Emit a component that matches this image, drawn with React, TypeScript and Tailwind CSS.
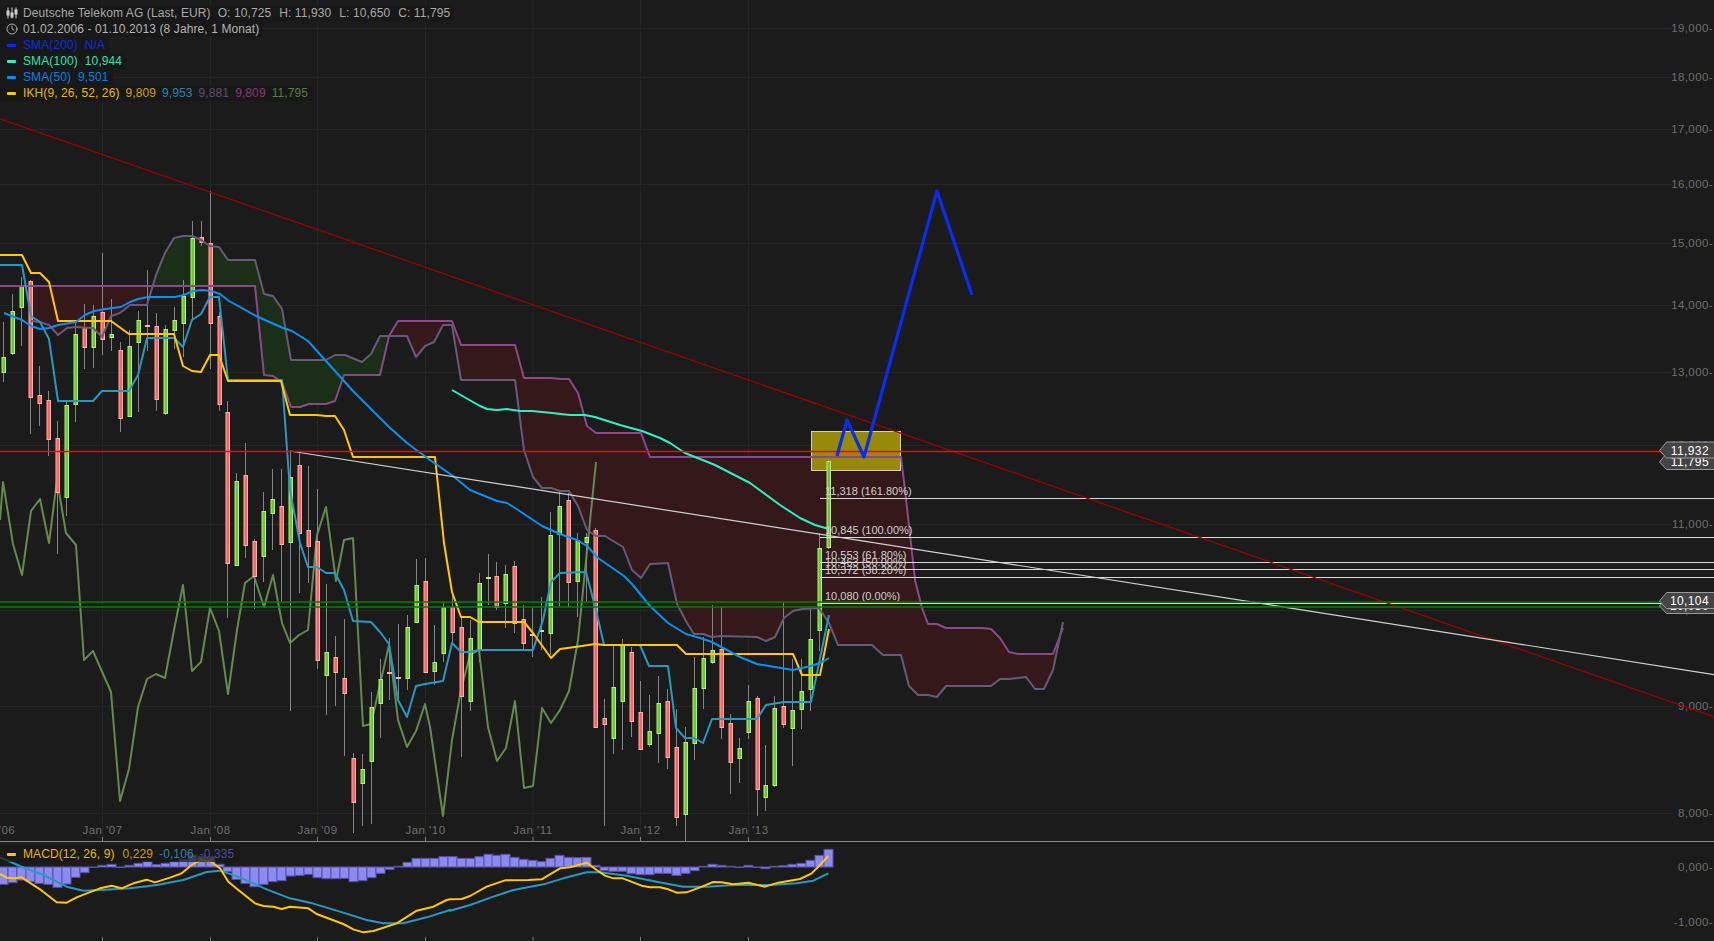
import React from 'react';
import { Clock } from 'lucide-react';

type Pt = [number, number];
type Candle = [number, number, number, number, 'g' | 'r'];

// wick top, wick bottom, body top, body bottom, colour - one per month from the left edge
const CANDLES: Candle[] = [
  [322, 382, 357, 372, 'g'], [294, 355, 311, 353, 'g'], [277, 346, 286, 307, 'g'], [280, 434, 281, 397, 'r'],
  [366, 426, 395, 403, 'r'], [391, 456, 400, 439, 'r'], [421, 554, 438, 492, 'r'], [402, 516, 405, 497, 'g'],
  [323, 422, 334, 404, 'g'], [304, 369, 327, 347, 'r'], [305, 368, 316, 347, 'g'], [253, 355, 312, 339, 'r'],
  [299, 351, 334, 337, 'g'], [342, 432, 350, 418, 'r'], [330, 417, 346, 416, 'g'], [311, 412, 320, 342, 'g'],
  [270, 351, 325, 327, 'r'], [313, 411, 326, 399, 'r'], [325, 415, 329, 413, 'g'], [307, 349, 320, 330, 'g'],
  [280, 357, 296, 323, 'g'], [221, 320, 238, 297, 'g'], [221, 246, 237, 242, 'r'], [191, 369, 243, 323, 'r'],
  [312, 411, 316, 404, 'r'], [401, 618, 412, 563, 'r'], [473, 565, 481, 565, 'g'], [443, 558, 475, 545, 'r'],
  [539, 609, 541, 576, 'r'], [492, 582, 511, 556, 'g'], [469, 550, 499, 513, 'g'], [469, 601, 506, 544, 'r'],
  [451, 711, 477, 542, 'g'], [451, 593, 465, 533, 'r'], [466, 583, 530, 546, 'r'], [489, 669, 541, 660, 'r'],
  [584, 715, 652, 675, 'g'], [636, 706, 657, 672, 'r'], [619, 756, 678, 693, 'r'], [753, 833, 758, 802, 'r'],
  [754, 826, 769, 783, 'g'], [692, 824, 707, 761, 'g'], [659, 738, 679, 703, 'g'], [638, 700, 672, 673, 'r'],
  [624, 700, 677, 678, 'r'], [615, 690, 627, 678, 'g'], [559, 622, 585, 622, 'g'], [558, 672, 581, 672, 'r'],
  [625, 685, 662, 671, 'g'], [602, 662, 607, 653, 'g'], [593, 643, 607, 632, 'r'], [618, 757, 627, 696, 'r'],
  [620, 711, 638, 701, 'g'], [573, 662, 583, 649, 'g'], [554, 605, 577, 578, 'g'], [562, 610, 576, 607, 'r'],
  [565, 628, 574, 603, 'g'], [561, 633, 566, 623, 'r'], [605, 650, 619, 643, 'r'], [608, 657, 634, 635, 'r'],
  [597, 650, 630, 631, 'g'], [512, 655, 535, 633, 'g'], [492, 607, 506, 534, 'g'], [493, 607, 500, 582, 'r'],
  [533, 617, 540, 581, 'g'], [533, 602, 537, 542, 'g'], [528, 728, 530, 727, 'r'], [699, 826, 718, 724, 'r'],
  [646, 754, 687, 738, 'g'], [639, 750, 645, 701, 'g'], [647, 737, 652, 721, 'r'], [681, 750, 712, 749, 'r'],
  [695, 747, 731, 744, 'g'], [676, 763, 703, 733, 'g'], [689, 769, 701, 757, 'r'], [709, 826, 747, 817, 'r'],
  [727, 841, 742, 814, 'g'], [657, 760, 688, 743, 'g'], [637, 709, 658, 688, 'g'], [605, 664, 650, 662, 'g'],
  [607, 739, 649, 727, 'r'], [714, 794, 723, 762, 'r'], [738, 783, 748, 758, 'g'], [685, 739, 701, 732, 'g'],
  [696, 816, 698, 789, 'r'], [745, 811, 785, 797, 'g'], [696, 787, 708, 785, 'g'], [602, 728, 706, 724, 'r'],
  [659, 766, 710, 728, 'g'], [659, 729, 691, 709, 'g'], [607, 711, 639, 689, 'g'], [533, 651, 548, 630, 'g'],
  [452, 549, 461, 547, 'g'],
];

const TENKAN: Pt[] = [[0,255],[22,255],[31,273],[40,273],[49,282],[58,321],[111,321],[129,334],[174,334],[183,366],[192,371],[201,372],[210,355],[219,355],[228,381],[281,381],[290,415],[317,415],[326,416],[335,416],[344,430],[353,457],[435,457],[444,543],[452,592],[461,617],[470,617],[479,622],[524,622],[533,633],[551,658],[560,649],[575,647],[595,644],[604,645],[677,645],[686,654],[793,654],[802,675],[820,675],[829,629]];
const KIJUN: Pt[] = [[0,265],[22,265],[31,316],[40,322],[49,339],[58,401],[93,401],[102,391],[129,391],[138,375],[147,338],[174,338],[183,347],[192,320],[201,314],[210,297],[219,297],[228,380],[282,380],[290,490],[300,543],[308,567],[317,567],[326,573],[335,573],[344,590],[353,621],[371,622],[380,632],[389,644],[398,700],[407,717],[416,686],[425,684],[443,681],[452,643],[461,652],[470,652],[479,650],[533,650],[543,620],[551,582],[560,573],[586,572],[596,610],[604,645],[640,645],[649,666],[668,666],[676,728],[685,738],[694,738],[703,743],[712,719],[757,719],[766,705],[784,702],[811,702],[829,615]];
const SMA50: Pt[] = [[4,313],[22,320],[31,326],[40,329],[49,328],[58,325],[76,322],[85,315],[94,311],[112,308],[121,307],[130,302],[138,299],[148,297],[175,297],[184,295],[193,291],[202,290],[211,291],[220,294],[229,301],[256,316],[283,328],[292,331],[308,341],[326,361],[353,391],[380,418],[389,427],[407,443],[430,460],[453,476],[470,490],[497,501],[507,503],[515,508],[542,526],[560,534],[577,540],[587,546],[598,558],[624,576],[632,584],[650,606],[668,623],[686,634],[700,638],[712,642],[740,657],[757,664],[775,667],[793,670],[802,668],[811,666],[820,663],[829,658]];
const SMA100: Pt[] = [[452,390],[480,406],[487,409],[497,410],[507,409],[520,411],[532,411],[552,413],[570,415],[585,415],[595,417],[620,425],[642,431],[660,438],[670,443],[685,453],[715,465],[750,483],[780,505],[800,518],[815,525],[829,529]];
const SENKOU_B: Pt[] = [[0,286],[255,286],[264,375],[273,376],[282,382],[291,407],[300,407],[309,404],[326,404],[335,401],[344,375],[380,375],[389,336],[398,321],[452,321],[461,345],[515,345],[524,378],[551,378],[560,379],[569,379],[578,393],[587,426],[596,433],[641,433],[650,457],[901,457],[905,490],[915,580],[922,608],[928,624],[937,624],[946,628],[982,628],[991,629],[1000,638],[1009,652],[1018,654],[1053,654],[1063,628]];
const SENKOU_A: Pt[] = [[31,321],[40,322],[49,325],[58,335],[67,328],[76,327],[93,328],[102,337],[111,316],[120,313],[130,305],[147,305],[156,275],[165,253],[174,238],[183,236],[192,236],[201,240],[210,246],[219,247],[228,260],[255,260],[264,294],[273,296],[282,309],[291,360],[326,360],[335,355],[345,355],[362,362],[371,354],[380,336],[407,336],[416,357],[425,346],[434,342],[443,325],[452,325],[461,380],[515,380],[524,450],[533,477],[542,488],[551,488],[560,491],[569,491],[578,506],[587,530],[596,536],[605,536],[623,547],[632,570],[641,578],[650,564],[668,563],[677,604],[687,623],[694,634],[703,634],[712,637],[721,636],[757,637],[766,641],[775,637],[784,618],[793,611],[802,609],[819,608],[829,623],[838,645],[872,645],[883,655],[901,655],[909,686],[918,695],[928,695],[937,697],[946,686],[991,686],[1000,679],[1009,679],[1018,678],[1026,677],[1035,689],[1044,689],[1053,670],[1063,622]];
const CHIKOU: Pt[] = [[0,520],[3,482],[13,544],[22,575],[31,511],[40,499],[49,543],[57,480],[66,533],[76,545],[84,660],[93,651],[111,692],[120,801],[129,769],[138,707],[147,679],[156,674],[165,678],[174,630],[183,585],[192,671],[201,662],[210,608],[219,631],[228,694],[237,630],[245,583],[254,576],[264,607],[273,575],[282,623],[290,643],[299,635],[308,630],[317,535],[326,507],[336,581],[344,540],[353,538],[363,726],[371,724],[389,645],[398,720],[407,747],[416,731],[425,704],[430,727],[443,816],[452,740],[461,690],[470,655],[479,650],[488,727],[497,761],[506,748],[515,701],[524,788],[533,786],[542,708],[551,723],[560,710],[569,691],[578,640],[596,462]];
const ZIGZAG: Pt[] = [[837,456],[847,420],[864,457],[937,191],[972,295]];

// MACD pane, bottom edge of each histogram bar read as y in the pane
const HIST = [163,158,150,155,160,163,172,162,142,128,112,106,103,112,106,100,94,104,100,95,88,75,78,80,103,125,148,160,170,163,155,152,138,136,133,143,146,146,145,155,152,143,130,118,109,97,85,85,85,80,80,85,85,80,73,76,73,82,88,91,95,85,76,82,83,82,106,122,124,124,131,134,134,130,130,136,130,122,109,103,106,109,112,106,112,116,109,107,103,100,91,76,58].map((v) => 830 + v / 3);
const MACD_LEFT: Pt[] = [[0,132],[20,143],[45,145],[65,142],[120,178],[170,217],[200,218],[230,202],[260,190],[300,175],[335,167],[365,175],[400,160],[440,149],[465,157],[510,143],[545,130],[575,105],[600,91],[630,93],[660,115],[685,155],[715,180],[765,220],[790,228],[820,230],[845,237],[870,230],[925,235],[950,252],[1030,282],[1060,298],[1090,307],[1120,303],[1190,280],[1250,242],[1300,230],[1340,210]];
const MACD_RIGHT: Pt[] = [[0,208],[35,207],[60,198],[110,170],[165,151],[235,150],[275,148],[330,115],[360,112],[410,98],[440,120],[465,137],[490,145],[518,145],[575,167],[600,172],[630,172],[655,178],[680,188],[710,187],[750,172],[790,156],[815,157],[850,163],[895,158],[945,170],[985,158],[1050,147],[1085,130],[1110,105],[1135,78]];
const SIGNAL_LEFT: Pt[] = [[0,82],[60,108],[130,135],[200,170],[250,182],[300,180],[390,175],[470,165],[550,150],[620,126],[660,122],[720,142],[800,178],[870,205],[930,218],[1020,245],[1100,270],[1150,280],[1210,280],[1280,262],[1350,240]];
const SIGNAL_RIGHT: Pt[] = [[0,242],[60,225],[130,200],[190,180],[280,163],[340,145],[410,127],[450,127],[530,137],[620,155],[700,170],[770,170],[850,165],[960,165],[1040,160],[1090,152],[1135,130]];

const paneLine = (left: Pt[], right: Pt[]): Pt[] => [
  ...left.map(([x, y]): Pt => [x / 3, 830 + y / 3]),
  ...right.map(([x, y]): Pt => [450 + x / 3, 830 + y / 3]),
];

const pts = (p: Pt[]) => p.map(([x, y]) => `${x},${y}`).join(' ');
const barX = (i: number) => Math.floor(3.8 + 8.967 * i) + 0.5;

const PRICE_LEVELS: [string, number][] = [['19,000', 28], ['18,000', 77], ['17,000', 129], ['16,000', 184], ['15,000', 243], ['14,000', 305], ['13,000', 372], ['12,000', 445], ['11,000', 524], ['10,000', 610], ['9,000', 706], ['8,000', 813]];
const YEARS: [string, number][] = [["'06", 7], ["Jan '07", 102.5], ["Jan '08", 210.5], ["Jan '09", 317.5], ["Jan '10", 425.5], ["Jan '11", 533], ["Jan '12", 640.5], ["Jan '13", 748.5]];
const FIB_LINES = [498, 537, 562, 569, 577, 603];
const FIB_LABELS: [string, number][] = [['11,318 (161.80%)', 495], ['10,845 (100.00%)', 534], ['10,553 (61.80%)', 559], ['10,463 (50.00%)', 566], ['10,372 (38.20%)', 574], ['10,080 (0.00%)', 600]];
const CLOUD = pts([...SENKOU_A, ...SENKOU_B.slice().reverse().filter(([x]) => x >= 31), [31, 286]]);

const Line = ({ p, color, w = 2 }: { p: Pt[]; color: string; w?: number }) => (
  <polyline points={pts(p)} fill="none" stroke={color} strokeWidth={w} strokeLinejoin="round" />
);

const PriceTag = ({ y, label }: { y: number; label: string }) => (
  <g>
    <path d={`M1714 ${y - 8.5} L1666.5 ${y - 8.5} L1659.5 ${y} L1666.5 ${y + 7.5} L1714 ${y + 7.5}`} fill="#444444" stroke="#9a9a9a" />
    <text x={1709} y={y + 4} textAnchor="end" className="fill-white text-[12px] tracking-[0.4px]">{label}</text>
  </g>
);

const Dash = ({ color }: { color: string }) => (
  <span className="w-[9px] h-[3px] rounded-[1px] ml-[7px] mr-[7px] shrink-0" style={{ backgroundColor: color }} />
);

const Row = ({ children }: { children: React.ReactNode }) => (
  <div className="flex items-center h-4 w-fit pr-1 bg-[#181818] whitespace-nowrap">{children}</div>
);

const App: React.FC = () => (
  <div className="w-full h-[941px] flex flex-col bg-[#1c1b1b] overflow-hidden font-['Liberation_Sans',Arial,sans-serif] text-[12px] tracking-[0.1px]">
    {/* price pane */}
    <div className="relative h-[842px] border-b border-[#8a8a8a] shrink-0">
      <svg width={1714} height={841} className="block">
        {PRICE_LEVELS.map(([, y]) => <line key={y} x1={0} x2={1672} y1={y + 0.5} y2={y + 0.5} stroke="#252525" />)}
        {YEARS.slice(1).map(([, x]) => <line key={x} x1={x} x2={x} y1={0} y2={837} stroke="#252525" />)}

        <defs>
          <clipPath id="cloud-green"><rect x={152} y={0} width={234} height={841} /></clipPath>
          <clipPath id="cloud-red-a"><rect x={0} y={0} width={152} height={841} /></clipPath>
          <clipPath id="cloud-red-b"><rect x={386} y={0} width={800} height={841} /></clipPath>
        </defs>
        <polygon points={CLOUD} fillRule="evenodd" fill="#1b2f18" clipPath="url(#cloud-green)" />
        <polygon points={CLOUD} fillRule="evenodd" fill="#34181a" clipPath="url(#cloud-red-a)" />
        <polygon points={CLOUD} fillRule="evenodd" fill="#34181a" clipPath="url(#cloud-red-b)" />

        <rect x={811.5} y={431.5} width={89} height={39} fill="#968a08" stroke="#cfcfcf" />

        {YEARS.slice(1).map(([, x]) => <line key={x} x1={x} x2={x} y1={837} y2={841} stroke="#7a7a7a" />)}
        {PRICE_LEVELS.map(([label, y]) => (
          <text key={label} x={1713} y={y + 4} textAnchor="end" className="fill-[#6e6e6e] text-[11.5px] tracking-[0.4px]">{label}-</text>
        ))}
        {YEARS.map(([label, x]) => (
          <text key={label} x={x} y={834} textAnchor="middle" className="fill-[#6e6e6e] text-[11.5px] tracking-[0.5px]">{label}</text>
        ))}

        <Line p={CHIKOU} color="#648a50" />
        {CANDLES.map(([top, bottom, bodyTop, bodyBottom, c], i) => {
          const x = barX(i);
          const thin = bodyBottom - bodyTop < 3;
          return (
            <g key={i}>
              <line x1={x} x2={x} y1={top} y2={bottom} stroke="#858585" />
              {thin ? (
                <rect x={x - 2.5} y={bodyTop} width={5} height={2} fill={c === 'g' ? '#b4f080' : '#ffb4ac'} />
              ) : (
                <rect x={x - 1.5} y={bodyTop + 0.5} width={3.5} height={bodyBottom - bodyTop} fill={c === 'g' ? '#70c830' : '#f46868'} stroke={c === 'g' ? '#b4f080' : '#ffb0a8'} />
              )}
            </g>
          );
        })}

        <Line p={SENKOU_B} color="#8a4a88" />
        <Line p={SENKOU_A} color="#665a78" />
        <Line p={KIJUN} color="#2898c0" />
        <Line p={TENKAN} color="#ffc800" />
        <Line p={SMA50} color="#0a90f0" />
        <Line p={SMA100} color="#30f0c0" />

        {FIB_LINES.map((y) => <line key={y} x1={820} x2={1714} y1={y + 0.5} y2={y + 0.5} stroke="#d8d8d8" />)}
        {FIB_LABELS.map(([label, y]) => (
          <text key={label} x={825} y={y} className="fill-[#d0d0d0] text-[11px] tracking-normal">{label}</text>
        ))}

        <line x1={0} x2={1714} y1={118.8} y2={717} stroke="#a00000" strokeWidth={1.2} />
        <line x1={290} x2={1714} y1={451} y2={674.6} stroke="#d0d0d0" strokeWidth={1.2} />
        <line x1={0} x2={1660} y1={451.5} y2={451.5} stroke="#ff0000" strokeWidth={1.3} />
        <line x1={0} x2={1660} y1={602} y2={602} stroke="#008000" strokeWidth={1.3} />
        <line x1={0} x2={1660} y1={607} y2={607} stroke="#008000" strokeWidth={1.3} />
        <Line p={ZIGZAG} color="#0a2cf0" w={3.2} />

        <PriceTag y={462} label="11,795" />
        <PriceTag y={450.5} label="11,932" />
        <PriceTag y={606} label="10,080" />
        <PriceTag y={601} label="10,104" />
      </svg>

      {/* legend */}
      <div className="absolute left-0 top-[5px] flex flex-col text-[#a8a8a8]">
        <Row>
          <svg width={12} height={12} viewBox="0 0 12 12" className="ml-[6px] mr-[5px] shrink-0" fill="none" stroke="#cfcfcf">
            <path d="M2 0.5v11M6 0.5v11M10 0.5v11" />
            <rect x={1} y={4} width={2} height={4} fill="#cfcfcf" />
            <rect x={5} y={6} width={2} height={4} fill="#cfcfcf" />
            <rect x={9} y={3} width={2} height={4} fill="#cfcfcf" />
          </svg>
          <span>Deutsche Telekom AG (Last, EUR)</span>
          <span className="ml-[7px]">O: 10,725</span>
          <span className="ml-2">H: 11,930</span>
          <span className="ml-2">L: 10,650</span>
          <span className="ml-2">C: 11,795</span>
        </Row>
        <Row>
          <Clock size={12} strokeWidth={1.6} className="ml-[6px] mr-[5px] shrink-0 text-[#cfcfcf]" />
          <span className="text-[#b4b4b4]">01.02.2006 - 01.10.2013 (8 Jahre, 1 Monat)</span>
        </Row>
        <Row>
          <Dash color="#0a2cf0" />
          <span className="text-[#0a2cd8]">SMA(200)</span>
          <span className="ml-[7px] text-[#0a2cd8]">N/A</span>
        </Row>
        <Row>
          <Dash color="#30f0c0" />
          <span className="text-[#30e0b4]">SMA(100)</span>
          <span className="ml-[7px] text-[#30e0b4]">10,944</span>
        </Row>
        <Row>
          <Dash color="#0a90f0" />
          <span className="text-[#0a80e0]">SMA(50)</span>
          <span className="ml-[7px] text-[#0a80e0]">9,501</span>
        </Row>
        <Row>
          <Dash color="#ffc800" />
          <span className="text-[#e8b800]">IKH(9, 26, 52, 26)</span>
          <span className="ml-[6px] text-[#c8a010]">9,809</span>
          <span className="ml-[6px] text-[#2a86a8]">9,953</span>
          <span className="ml-[6px] text-[#5a5070]">9,881</span>
          <span className="ml-[6px] text-[#803a78]">9,809</span>
          <span className="ml-[6px] text-[#5d7a48]">11,795</span>
        </Row>
      </div>
    </div>

    {/* MACD pane */}
    <div className="relative flex-1">
      <svg width={1714} height={99} viewBox="0 842 1714 99" className="block">
        {HIST.map((y, i) => {
          const x = barX(i);
          const top = Math.min(y, 867);
          return <rect key={i} x={x - 4.5} y={top} width={9} height={Math.max(Math.abs(y - 867), 0.5)} fill="#8a8af0" stroke="#5a50a8" />;
        })}
        <Line p={paneLine(SIGNAL_LEFT, SIGNAL_RIGHT)} color="#2898c0" />
        <Line p={paneLine(MACD_LEFT, MACD_RIGHT)} color="#ffc800" />
        {YEARS.slice(1).map(([, x]) => <line key={x} x1={x} x2={x} y1={937} y2={941} stroke="#7a7a7a" />)}
        <text x={1713} y={871} textAnchor="end" className="fill-[#6e6e6e] text-[11.5px] tracking-[0.4px]">0,000-</text>
        <text x={1713} y={926} textAnchor="end" className="fill-[#6e6e6e] text-[11.5px] tracking-[0.4px]">-1,000-</text>
      </svg>
      <div className="absolute left-0 top-[4px] flex items-center h-4 pr-1 bg-[#181818]/70 whitespace-nowrap">
        <Dash color="#ffc800" />
        <span className="text-[#e8b800]">MACD(12, 26, 9)</span>
        <span className="ml-2 text-[#c8a010]">0,229</span>
        <span className="ml-[6px] text-[#2a86a8]">-0,106</span>
        <span className="ml-[6px] text-[#4d4a9a]">-0,335</span>
      </div>
    </div>
  </div>
);

export default App;
